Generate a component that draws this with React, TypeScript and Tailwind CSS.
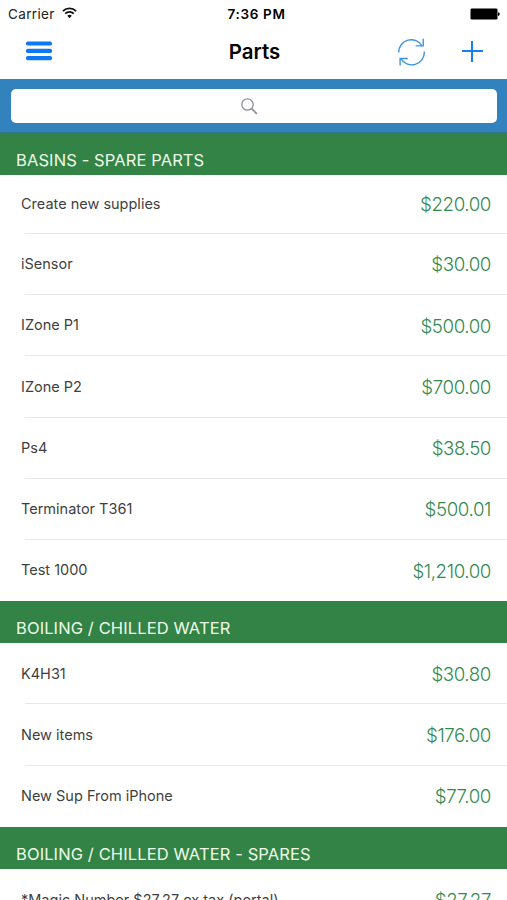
import clsx from 'clsx';

interface Part {
  name: string;
  price: string;
}

interface Section {
  title: string;
  parts: Part[];
}

const sections: Section[] = [
  {
    title: 'BASINS - SPARE PARTS',
    parts: [
      { name: 'Create new supplies', price: '$220.00' },
      { name: 'iSensor', price: '$30.00' },
      { name: 'IZone P1', price: '$500.00' },
      { name: 'IZone P2', price: '$700.00' },
      { name: 'Ps4', price: '$38.50' },
      { name: 'Terminator T361', price: '$500.01' },
      { name: 'Test 1000', price: '$1,210.00' },
    ],
  },
  {
    title: 'BOILING / CHILLED WATER',
    parts: [
      { name: 'K4H31', price: '$30.80' },
      { name: 'New items', price: '$176.00' },
      { name: 'New Sup From iPhone', price: '$77.00' },
    ],
  },
  {
    title: 'BOILING / CHILLED WATER - SPARES',
    parts: [{ name: '*Magic Number $27.27 ex tax (portal)', price: '$27.27' }],
  },
];

function WifiIcon() {
  return (
    <svg width="15" height="12" viewBox="0 0 15 12" fill="none" stroke="#111" strokeWidth="1.8">
      <path d="M0.9 4.1a9.4 9.4 0 0 1 13.2 0" />
      <path d="M3.2 6.7a6.1 6.1 0 0 1 8.6 0" />
      <path d="M7.5 11.2 5.2 8.8a3.3 3.3 0 0 1 4.6 0z" fill="#111" stroke="none" />
    </svg>
  );
}

function BatteryIcon() {
  return (
    <svg width="30" height="12" viewBox="0 0 30 12" fill="#000">
      <rect x="0.5" y="0.5" width="27" height="11" rx="1.3" />
      <path d="M28 4.3c1.1 0 1.7.8 1.7 1.8S29.1 7.9 28 7.9z" />
    </svg>
  );
}

function StatusBar() {
  return (
    <div className="grid h-[27px] grid-cols-3 items-center pr-[7px] pl-[8px] text-[13.5px] text-[#222]">
      <div className="flex items-center gap-[7px]">
        <span className="pt-px tracking-[0.35px]">Carrier</span>
        <span className="pb-px">
          <WifiIcon />
        </span>
      </div>
      <span className="pt-px pl-[5px] text-center font-semibold tracking-[0.65px] text-black">7:36 PM</span>
      <div className="flex justify-end">
        <BatteryIcon />
      </div>
    </div>
  );
}

function NavBar() {
  return (
    <div className="grid h-[52px] grid-cols-[1fr_auto_1fr] items-center pr-[24px] pb-[3px] pl-[26px]">
      <button type="button" aria-label="Menu" className="justify-self-start pb-[2px]">
        <svg width="26" height="20" viewBox="0 0 26 20" fill="#0f79f5">
          <rect y="0.5" width="26" height="4.1" rx="1.7" />
          <rect y="7.8" width="26" height="4.1" rx="1.7" />
          <rect y="15.1" width="26" height="4.1" rx="1.7" />
        </svg>
      </button>
      <h1 className="pt-[2px] text-[20.4px] font-semibold text-black">Parts</h1>
      <div className="flex items-center justify-end gap-[36px]">
        <button type="button" aria-label="Refresh">
          <svg width="28" height="28" viewBox="0 0 28 28" fill="none" stroke="#3e94de" strokeWidth="1.4">
            <path d="M0.7 14.5A12.6 12.6 0 0 1 24.2 8" />
            <path d="M25.2 0.8V7.9H17.6" />
            <path d="M26.3 13.5A12.6 12.6 0 0 1 2.7 20.4" />
            <path d="M2.1 27.5V20.5H9.8" />
          </svg>
        </button>
        <button type="button" aria-label="Add" className="pb-px">
          <svg width="21" height="21" viewBox="0 0 21 21" stroke="#1580f5" strokeWidth="2">
            <path d="M10 0v21M0 10h21" />
          </svg>
        </button>
      </div>
    </div>
  );
}

function SearchBar() {
  return (
    <div className="h-[54px] border-y border-t-[#4b7d9f] border-b-[#2f7590] bg-[#3182bd] pt-[9px] pr-[10px] pl-[11px]">
      <div className="flex h-[34px] items-center justify-center rounded-[5px] bg-white pr-[10px]">
        <svg width="17" height="17" viewBox="0 0 17 17" fill="none" stroke="#929298">
          <circle cx="6.5" cy="6.5" r="5.7" strokeWidth="1.3" />
          <path d="M10.7 10.7l5.1 5.1" strokeWidth="1.9" />
        </svg>
      </div>
    </div>
  );
}

function SectionHeader({ title }: { title: string }) {
  return (
    <h2 className="flex h-[42.4px] items-end bg-[#338346] pb-[3.6px] pl-[16px] text-[16.5px] leading-[24px] tracking-[0.11px] text-[#eefbe9]">
      {title}
    </h2>
  );
}

function PartRow({ part, tucked, last }: { part: Part; tucked: boolean; last: boolean }) {
  return (
    <li className={clsx('flex flex-col', tucked ? 'h-[58.7px]' : 'h-[61.15px]')}>
      <div className={clsx('flex flex-1 items-center justify-between pr-[16px] pl-[21px]', tucked && 'pb-[1.5px]')}>
        <span className="text-[14.5px] text-[#3f3f3f]">{part.name}</span>
        <span className="pt-[2.5px] text-[18.7px] font-light tracking-[-0.4px] text-[#338a50]">{part.price}</span>
      </div>
      {!last && <div className="ml-[25px] h-px bg-[#e8e8e8]" />}
    </li>
  );
}

export default function App() {
  return (
    <div className="h-[900px] w-full overflow-hidden bg-white font-['Inter',sans-serif]">
      <StatusBar />
      <NavBar />
      <SearchBar />
      {sections.map((section, s) => (
        <section key={section.title}>
          <SectionHeader title={section.title} />
          <ul>
            {section.parts.map((part, i) => (
              <PartRow
                key={part.name}
                part={part}
                tucked={s === 0 && i === 0}
                last={i === section.parts.length - 1}
              />
            ))}
          </ul>
        </section>
      ))}
    </div>
  );
}
